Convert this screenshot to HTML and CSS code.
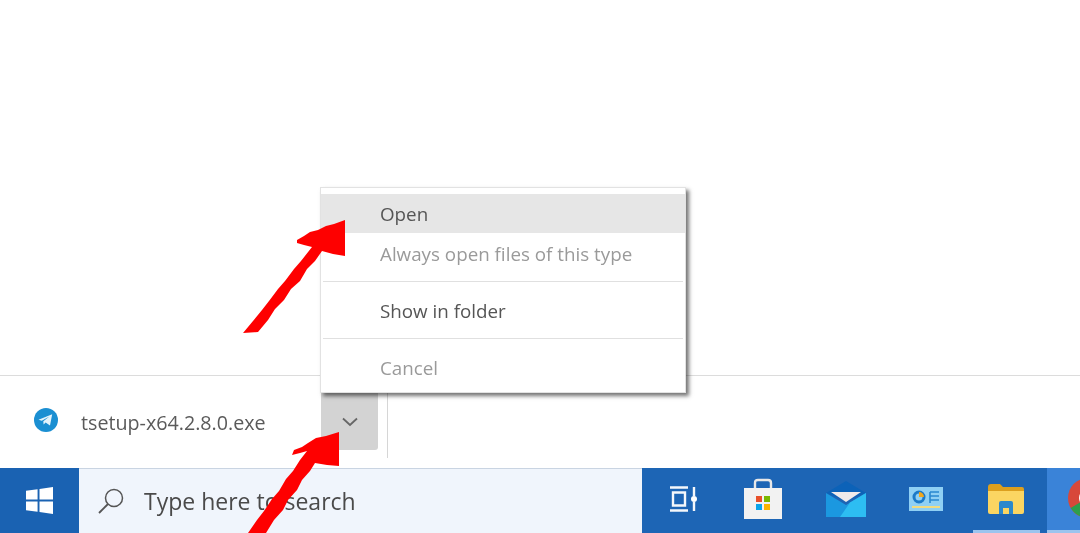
FILE: index.html
```html
<!DOCTYPE html>
<html lang="en">
<head>
<meta charset="utf-8">
<title>Download</title>
<link rel="stylesheet" href="styles.css">
</head>
<body>
<div class="page">
  <main class="content"></main>
  <section class="downloads">
    <div class="file">
      <svg class="tg" viewBox="0 0 24 24"><circle cx="12" cy="12" r="12" fill="#1b8fd2"/><path d="M4.5 11.8 18.2 6.2 16 17.6 11.6 14.4 9.6 16.4 9.3 13.2 15.4 8.6 7.8 12.8Z" fill="#e4f3fb"/></svg>
      <span class="name">tsetup-x64.2.8.0.exe</span>
    </div>
    <div class="chev-btn">
      <svg viewBox="0 0 16 10" class="chev"><path d="M1 1.5 8 8 15 1.5" fill="none" stroke="#666" stroke-width="1.8"/></svg>
    </div>
    <div class="divider"></div>
  </section>
  <footer class="taskbar">
    <div class="start">
      <svg viewBox="0 0 28 28" class="win"><path d="M0 4 12 2.3V13H0ZM14 2 28 0V13H14ZM0 15H12V25.7L0 24ZM14 15H28V28L14 26Z" fill="#fff"/></svg>
    </div>
    <div class="search">
      <svg viewBox="0 0 28 28" class="lens"><circle cx="17" cy="11" r="8.5" fill="none" stroke="#555" stroke-width="1.5"/><path d="M11 17 2 26" stroke="#555" stroke-width="1.8"/></svg>
      <span class="placeholder">Type here to search</span>
    </div>
    <div class="tray">
      <div class="app"><svg viewBox="0 0 28 26" class="i-task"><path d="M1 1.5H19M1 24.5H19M4 6.5H16V19.5H4Z M25 1V10M25 16V25" fill="none" stroke="#f4f7fb" stroke-width="2.4"/><circle cx="25" cy="13" r="3" fill="#fff"/></svg></div>
      <div class="app"><svg viewBox="0 0 40 42" class="i-store"><path d="M12 10V5Q12 2 15 2H25Q28 2 28 5V10" fill="none" stroke="#e8e8e8" stroke-width="2.4"/><path d="M1 10H39V41H1Z" fill="#f2f2f2"/><rect x="13" y="18" width="6" height="6" fill="#e8502a"/><rect x="21" y="18" width="6" height="6" fill="#7ab800"/><rect x="13" y="26" width="6" height="6" fill="#0ba4ea"/><rect x="21" y="26" width="6" height="6" fill="#fbb400"/></svg></div>
      <div class="app"><svg viewBox="0 0 40 36" class="i-mail"><path d="M0 12 20 0 40 12 20 20Z" fill="#0c62b8"/><path d="M5 11 35 11 20 21Z" fill="#efeaea"/><path d="M0 12 20 24 40 12V36H0Z" fill="#1b98e0"/><path d="M40 12V36H14L24 21.6Z" fill="#2dbdf2"/></svg></div>
      <div class="app"><svg viewBox="0 0 34 24" class="i-news"><rect width="34" height="24" fill="#8fd0f4"/><circle cx="10" cy="10" r="5" fill="none" stroke="#1c7ac8" stroke-width="3"/><path d="M10 5A5 5 0 0 1 15 10H10Z" fill="#f2a71c"/><path d="M21 5H30M21 9H30M21 13H30M21 5V16" stroke="#2a88d0" stroke-width="1.6"/><rect x="3" y="19" width="28" height="2" fill="#f2dc80"/></svg></div>
      <div class="app"><svg viewBox="0 0 36 30" class="i-folder"><path d="M0 3Q0 0 3 0H12L15 3H34Q36 3 36 5V8H0Z" fill="#dc9f1e"/><path d="M0 7H36V28Q36 30 34 30H2Q0 30 0 28Z" fill="#fbd562"/><path d="M11 30V19Q11 17 13 17H23Q25 17 25 19V30Z" fill="#2c88cc"/><rect x="15" y="24" width="6" height="6" fill="#fbd562"/></svg></div>
    </div>
    <div class="chrome-tile">
      <svg viewBox="0 0 40 40" class="i-chrome"><circle cx="20" cy="20" r="20" fill="#d8483a"/><path d="M20 20 2.7 30A20 20 0 0 0 30 37.3Z" fill="#2e9e4c"/><circle cx="20" cy="20" r="9" fill="#fff"/><circle cx="20" cy="20" r="7" fill="#3b86e0"/></svg>
    </div>
  </footer>
</div>

<nav class="menu">
  <div class="item active">Open</div>
  <div class="item muted">Always open files of this type</div>
  <div class="sep"></div>
  <div class="item">Show in folder</div>
  <div class="sep"></div>
  <div class="item muted">Cancel</div>
</nav>

<svg class="arrow" viewBox="0 0 1080 533">
  <path d="M243 333 253 321 262 310 269 301 278 289 285 281 294 269 301 261 312 247 304 245 297 243 297 240 304 236 310 232 318 230 326 226 334 224 345 220 345 256 333 254 322 251 315 261 307 269 300 281 291 289 284 300 275 309 268 320 258 332Z" fill="#fe0000"/>
  <path d="M248 533 257 520 264 511 272 499 279 491 286 479 293 471 300 460 307 451 300 453 292 455 294 450 302 447 308 443 316 438 326 436 339 432 339 466 327 465 315 463 310 471 302 480 297 490 288 500 283 510 274 520 266 533Z" fill="#fe0000"/>
</svg>
</body>
</html>
```
FILE: styles.css
```css
* { box-sizing: border-box; }
html, body { margin: 0; height: 100%; overflow: hidden; background: #fff; }
body { font-family: "Open Sans", "Noto Sans", sans-serif; color: #555; }

.page { height: 533px; display: flex; flex-direction: column; filter: blur(0.45px); }
.content { height: 375px; flex: none; }

.downloads {
  height: 93px; flex: none;
  display: flex; align-items: flex-start;
  border-top: 1px solid #dcdcdc;
  padding-left: 34px;
}
.file { display: flex; align-items: center; width: 287px; height: 92px; }
.tg { width: 24px; height: 24px; margin-top: -4px; flex: none; }
.name { margin-left: 23px; font-size: 19.7px; color: #5a5a5a; white-space: nowrap; }
.chev-btn {
  width: 57px; height: 74px; background: #d3d3d3; border-radius: 0 0 3px 3px;
  display: flex; align-items: center; justify-content: center;
  padding-top: 18px;
}
.chev { width: 16px; height: 10px; }
.divider { width: 1px; height: 82px; background: #d6d6d6; margin-left: 9px; }

.taskbar { height: 65px; flex: none; display: flex; background: #1d65b5; }
.start { width: 79px; display: flex; align-items: center; justify-content: center; background: #1a62b2; }
.win { width: 27px; height: 27px; }
.search {
  width: 563px; background: #f0f5fc; display: flex; align-items: center;
  padding-left: 18px; border-top: 1px solid #c9d4e2;
}
.lens { width: 28px; height: 28px; flex: none; }
.placeholder { margin-left: 19px; font-size: 23px; color: #4a4a4a; white-space: nowrap; }
.tray { width: 405px; display: flex; align-items: center; padding-left: 1px; padding-bottom: 3px; position: relative; }
.app { width: 80px; display: flex; justify-content: center; align-items: center; }
.app:nth-child(n+3) { transform: translateX(3px); }
.i-task { width: 28px; height: 26px; }
.i-store { width: 40px; height: 42px; }
.i-mail { width: 40px; height: 36px; }
.i-news { width: 34px; height: 24px; }
.i-folder { width: 36px; height: 30px; }
.tray::after { content: ""; position: absolute; right: 7px; bottom: 0; width: 67px; height: 3px; background: #9cc4ee; }
.chrome-tile { flex: 1; background: #3a83d8; display: flex; align-items: center; overflow: hidden; padding-left: 21px; padding-bottom: 3px; border-bottom: 3px solid #9cc4ee; }
.i-chrome { width: 40px; height: 40px; flex: none; }

.arrow { position: absolute; left: 0; top: 0; width: 1080px; height: 533px; filter: blur(0.4px); }

.menu {
  position: absolute; left: 320px; top: 187px; width: 366px; height: 206px;
  background: #fff; border: 1px solid #e2e2e2;
  box-shadow: 3px 3px 4px rgba(0,0,0,.55);
  padding-top: 6px; font-size: 18.8px; color: #555; filter: blur(0.4px);
}
.item { height: 39px; padding-left: 59px; display: flex; align-items: center; white-space: nowrap; }
.item.active { background: #e6e6e6; margin-bottom: 1px; }
.item.muted { color: #9a9a9a; }
.sep { height: 1px; margin: 8px 2px 9px; background: #e0e0e0; }
```
